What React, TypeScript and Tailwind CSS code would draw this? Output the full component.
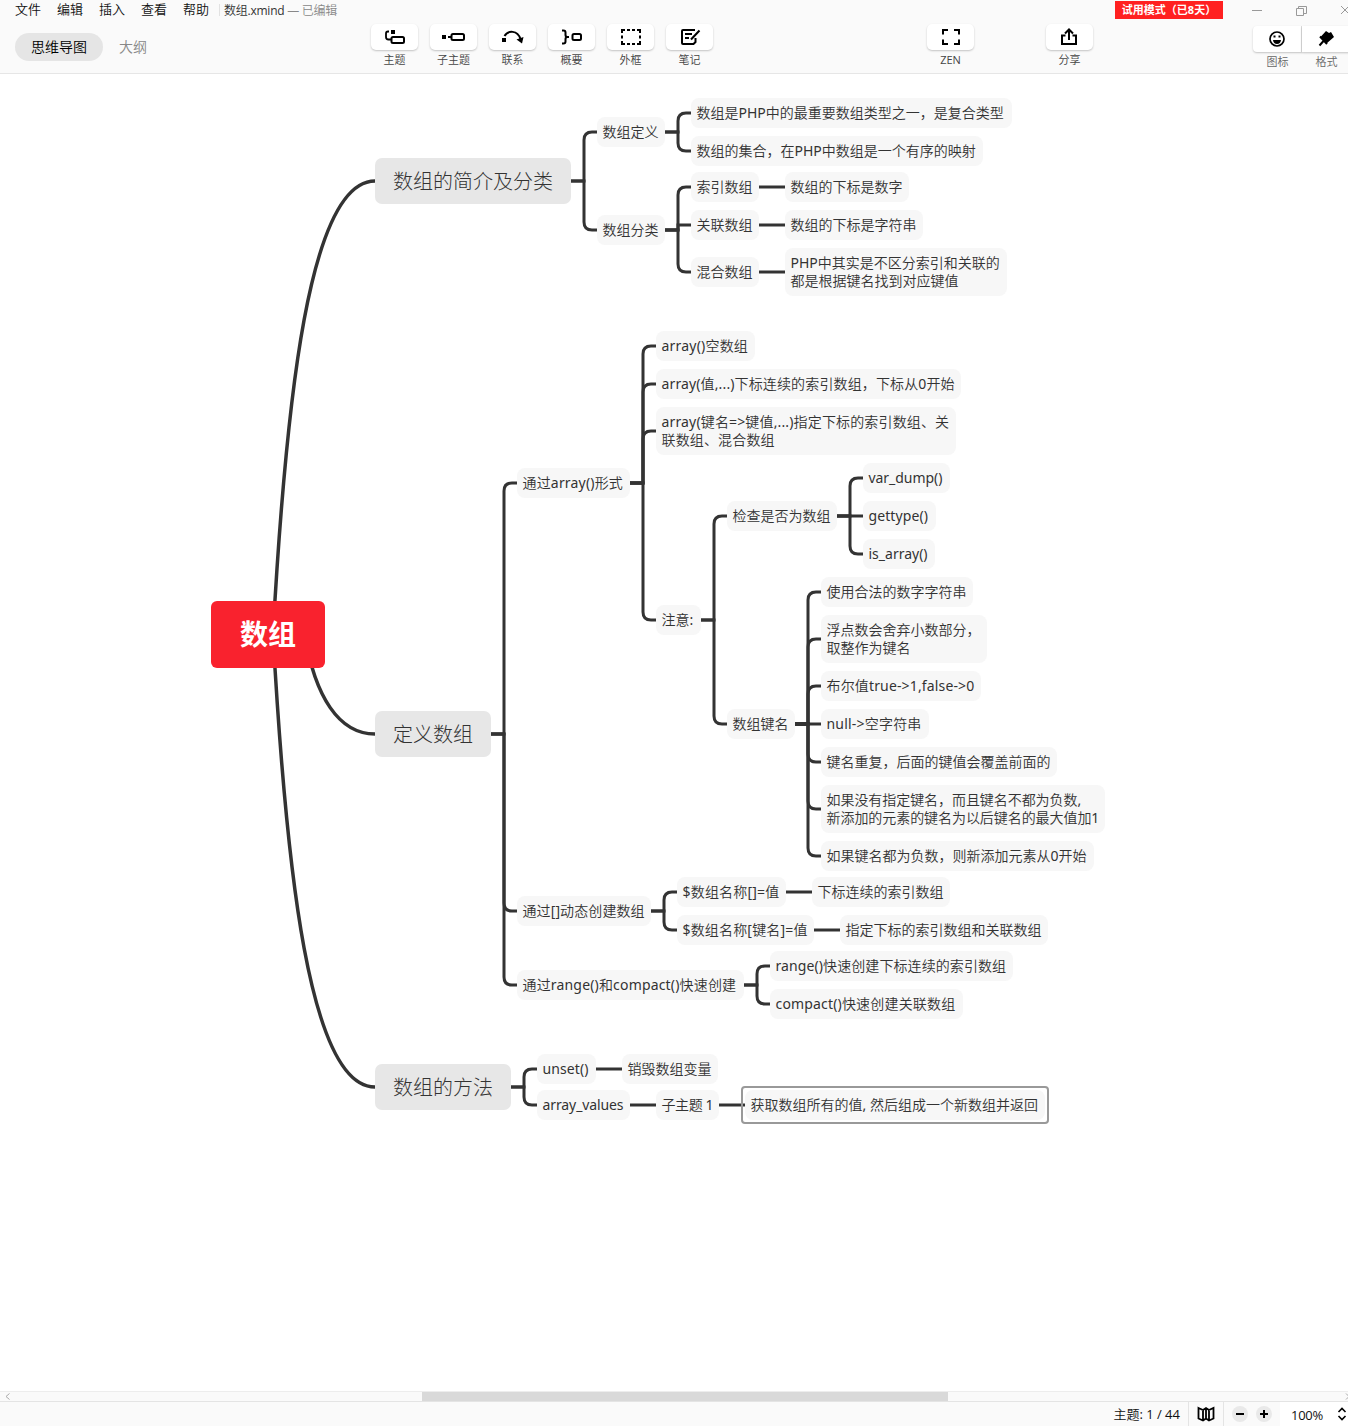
import type { ReactNode } from "react";

type Topic = {
  id: string;
  parent?: string;
  text: string;
  x: number;
  y: number;
  w: number;
  h?: number;
  tracking?: number;
};

// x is the left edge, y the vertical centre
const mainTopics: Topic[] = [
  { id: "intro", text: "数组的简介及分类", x: 375, y: 181, w: 196 },
  { id: "define", text: "定义数组", x: 375, y: 734, w: 116 },
  { id: "methods", text: "数组的方法", x: 375, y: 1087, w: 136 },
];

const subTopics: Topic[] = [
  { id: "i1", parent: "intro", text: "数组定义", x: 597, y: 132, w: 68 },
  { id: "i2", parent: "intro", text: "数组分类", x: 597, y: 230, w: 68 },
  { id: "i11", parent: "i1", text: "数组是PHP中的最重要数组类型之一，是复合类型", x: 691, y: 113, w: 321 },
  { id: "i12", parent: "i1", text: "数组的集合，在PHP中数组是一个有序的映射", x: 691, y: 151, w: 292 },
  { id: "i21", parent: "i2", text: "索引数组", x: 691, y: 187, w: 68 },
  { id: "i22", parent: "i2", text: "关联数组", x: 691, y: 225, w: 68 },
  { id: "i23", parent: "i2", text: "混合数组", x: 691, y: 272, w: 68 },
  { id: "i211", parent: "i21", text: "数组的下标是数字", x: 785, y: 187, w: 124 },
  { id: "i221", parent: "i22", text: "数组的下标是字符串", x: 785, y: 225, w: 138 },
  { id: "i231", parent: "i23", text: "PHP中其实是不区分索引和关联的\n都是根据键名找到对应键值", x: 785, y: 272, w: 222, h: 48 },

  { id: "d1", parent: "define", text: "通过array()形式", x: 517, y: 483, w: 113, tracking: 0.18 },
  { id: "d2", parent: "define", text: "通过[]动态创建数组", x: 517, y: 911, w: 134, tracking: 0.1 },
  { id: "d3", parent: "define", text: "通过range()和compact()快速创建", x: 517, y: 985, w: 227, tracking: 0.17 },
  { id: "d11", parent: "d1", text: "array()空数组", x: 656, y: 346, w: 99, tracking: 0.2 },
  { id: "d12", parent: "d1", text: "array(值,...)下标连续的索引数组，下标从0开始", x: 656, y: 384, w: 305, tracking: 0.13 },
  { id: "d13", parent: "d1", text: "array(键名=>键值,...)指定下标的索引数组、关\n联数组、混合数组", x: 656, y: 431, w: 300, h: 48, tracking: 0.15 },
  { id: "d14", parent: "d1", text: "注意:", x: 656, y: 620, w: 45 },
  { id: "d141", parent: "d14", text: "检查是否为数组", x: 727, y: 516, w: 110 },
  { id: "d142", parent: "d14", text: "数组键名", x: 727, y: 724, w: 68 },
  { id: "c1", parent: "d141", text: "var_dump()", x: 863, y: 478, w: 87, tracking: -0.05 },
  { id: "c2", parent: "d141", text: "gettype()", x: 863, y: 516, w: 73, tracking: 0.1 },
  { id: "c3", parent: "d141", text: "is_array()", x: 863, y: 554, w: 72 },
  { id: "k1", parent: "d142", text: "使用合法的数字字符串", x: 821, y: 592, w: 152 },
  { id: "k2", parent: "d142", text: "浮点数会舍弃小数部分，\n取整作为键名", x: 821, y: 639, w: 166, h: 48 },
  { id: "k3", parent: "d142", text: "布尔值true->1,false->0", x: 821, y: 686, w: 160, tracking: 0.15 },
  { id: "k4", parent: "d142", text: "null->空字符串", x: 821, y: 724, w: 108, tracking: 0.2 },
  { id: "k5", parent: "d142", text: "键名重复，后面的键值会覆盖前面的", x: 821, y: 762, w: 236 },
  { id: "k6", parent: "d142", text: "如果没有指定键名，而且键名不都为负数,\n新添加的元素的键名为以后键名的最大值加1", x: 821, y: 809, w: 284, h: 48, tracking: -0.06 },
  { id: "k7", parent: "d142", text: "如果键名都为负数，则新添加元素从0开始", x: 821, y: 856, w: 273 },
  { id: "d21", parent: "d2", text: "$数组名称[]=值", x: 677, y: 892, w: 109, tracking: 0.2 },
  { id: "d22", parent: "d2", text: "$数组名称[键名]=值", x: 677, y: 930, w: 137, tracking: 0.17 },
  { id: "d211", parent: "d21", text: "下标连续的索引数组", x: 812, y: 892, w: 138 },
  { id: "d221", parent: "d22", text: "指定下标的索引数组和关联数组", x: 840, y: 930, w: 208 },
  { id: "d31", parent: "d3", text: "range()快速创建下标连续的索引数组", x: 770, y: 966, w: 243, tracking: 0.09 },
  { id: "d32", parent: "d3", text: "compact()快速创建关联数组", x: 770, y: 1004, w: 193, tracking: 0.17 },

  { id: "m1", parent: "methods", text: "unset()", x: 537, y: 1069, w: 59, tracking: 0.1 },
  { id: "m2", parent: "methods", text: "array_values", x: 537, y: 1105, w: 93, tracking: -0.1 },
  { id: "m11", parent: "m1", text: "销毁数组变量", x: 622, y: 1069, w: 96 },
  { id: "m21", parent: "m2", text: "子主题 1", x: 656, y: 1105, w: 63, tracking: -0.4 },
  { id: "m211", parent: "m21", text: "获取数组所有的值, 然后组成一个新数组并返回", x: 745, y: 1105, w: 300 },
];

const byId = new Map([...mainTopics, ...subTopics].map((t) => [t.id, t]));

function elbow(child: Topic) {
  const parent = byId.get(child.parent!)!;
  const startX = parent.x + parent.w;
  const dy = child.y - parent.y;
  if (dy === 0) return `M${startX} ${parent.y}H${child.x}`;
  const trunk = startX + 13;
  // too close to the trunk for a rounded corner
  if (Math.abs(dy) < 8) return `M${startX} ${parent.y}H${trunk}V${child.y}H${child.x}`;
  const r = 8;
  const dir = Math.sign(dy);
  return `M${startX} ${parent.y}H${trunk}V${child.y - dir * r}Q${trunk} ${child.y} ${trunk + r} ${child.y}H${child.x}`;
}

function Links() {
  return (
    <svg className="absolute left-0 top-0" width="1348" height="1317" viewBox="0 74 1348 1317" fill="none" stroke="#333">
      <g strokeWidth="3.5">
        <path d="M273 634C286 400 309 181 375 181" />
        <path d="M304.500 634C315 697 339 734 375 734" />
        <path d="M273 634C286 868 309 1087 375 1087" />
      </g>
      <g strokeWidth="3">
        {subTopics.map((t) => (
          <path key={t.id} d={elbow(t)} />
        ))}
      </g>
    </svg>
  );
}

function MindMap() {
  return (
    <main className="relative h-[1317px] overflow-hidden bg-white font-['Noto_Sans','Noto_Sans_CJK_SC_DemiLight','Noto_Sans_CJK_SC_Light','Noto_Sans_CJK_SC',sans-serif] text-[#333]">
      <Links />
      <div className="absolute left-[211px] top-[527px] flex h-[67px] w-[114px] items-center justify-center rounded-[6px] bg-[#f9222e] pb-1 font-['Noto_Sans_CJK_SC',sans-serif] text-[28px] font-bold text-white">
        数组
      </div>
      {mainTopics.map((t) => (
        <div
          key={t.id}
          className="absolute flex h-[46px] items-center justify-center whitespace-nowrap rounded-[7px] bg-[#e7e7e7] pt-0.5 font-['Noto_Sans','Noto_Sans_CJK_SC',sans-serif] text-xl font-light"
          style={{ left: t.x, top: t.y - 23 - 74, width: t.w }}
        >
          {t.text}
        </div>
      ))}
      {subTopics.map((t) => (
        <div
          key={t.id}
          className="absolute flex items-center whitespace-pre rounded-[8px] bg-[#f7f7f7] pl-[5.5px] text-sm leading-[18px]"
          style={{ left: t.x, top: t.y - (t.h ?? 30) / 2 - 74, width: t.w, height: t.h ?? 30, letterSpacing: t.tracking }}
        >
          {t.text}
        </div>
      ))}
      {/* selection frame */}
      <div className="absolute left-[741px] top-[1012px] h-[38px] w-[308px] rounded-[4px] border-2 border-[#999]" />
    </main>
  );
}

function Icon({ children }: { children: ReactNode }) {
  return (
    <svg width="47" height="26" viewBox="0 0 47 26" fill="none" stroke="#000" strokeWidth="2">
      {children}
    </svg>
  );
}

const tools = [
  {
    label: "主题",
    icon: (
      <>
        <path d="M18 7.5h-1q-2 0-2 2V13q0 2.5 2.500 2.500H20" strokeWidth="1.8" />
        <path d="M20 6h4v4h-4z" fill="#000" stroke="none" />
        <rect x="20.500" y="13" width="12.500" height="6" rx="1.500" />
      </>
    ),
  },
  {
    label: "子主题",
    icon: (
      <>
        <path d="M12 11h4v4h-4z" fill="#000" stroke="none" />
        <path d="M18 13h3" />
        <rect x="21.500" y="10" width="12.500" height="6" rx="1.500" />
      </>
    ),
  },
  {
    label: "联系",
    icon: (
      <>
        <path d="M13 14h4v4h-4z" fill="#000" stroke="none" />
        <path d="M15.500 12C19 6 28.500 6 31.500 15" />
        <path d="M27.500 15.500 34.500 13 33 19.500z" fill="#000" stroke="none" />
      </>
    ),
  },
  {
    label: "概要",
    icon: (
      <>
        <path d="M14 6.500h1.500q2 0 2 2V11q0 2 2 2H21M14 19.500h1.500q2 0 2-2V15q0-2 2-2" />
        <rect x="24.500" y="10" width="8.500" height="6" rx="1.500" />
      </>
    ),
  },
  {
    label: "外框",
    icon: (
      <path d="M15 9V6h3M20 6h3M25 6h3M30 6h3v3M33 11.500v3M33 17v3h-3M28 20h-3M23 20h-3M18 20h-3v-3M15 14.500v-3" />
    ),
  },
  {
    label: "笔记",
    icon: (
      <>
        <path d="M29 6H17q-1 0-1 1v12q0 1 1 1h10.500l2-2v-4" />
        <path d="M19 10h7M19 14h4M33.500 6.500 25 15.500" />
      </>
    ),
  },
];

function ToolButton({ label, children }: { label: string; children: ReactNode }) {
  return (
    <div className="flex w-[47px] flex-col items-center">
      <button className="h-[26px] w-[47px] rounded-[5px] bg-white shadow-[0_1px_2px_rgba(0,0,0,0.22)]">
        <Icon>{children}</Icon>
      </button>
      <span className="mt-0.5 whitespace-nowrap text-[11px] leading-4 text-[#444]">{label}</span>
    </div>
  );
}

function Header() {
  return (
    <header className="h-[74px] overflow-hidden border-b border-[#e6e6e6] bg-[#fafafa]">
      <div className="flex h-5 items-center pl-[15px] text-[13px] text-[#111]">
        <nav className="flex gap-4">
          {["文件", "编辑", "插入", "查看", "帮助"].map((m) => (
            <span key={m}>{m}</span>
          ))}
        </nav>
        <span className="ml-2.5 h-3 w-px bg-[#e2e2e2]" />
        <span className="ml-1 whitespace-nowrap pt-px text-xs tracking-[-0.250px] text-[#333]">
          数组.xmind <span className="text-[#888]">— 已编辑</span>
        </span>
        <span className="ml-auto mr-[29px] flex h-[18px] w-[108px] items-center justify-center whitespace-nowrap bg-[#ff2020] font-['Open_Sans','Noto_Sans_CJK_SC',sans-serif] text-[11px] font-bold text-white">
          试用模式（已8天）
        </span>
        <svg className="shrink-0" width="96" height="20" fill="none" stroke="#999">
          <path d="M0 10.500h10M44.500 8.500h7v7h-7zM46.500 8.500v-2h8v7h-3M89 6l8 8M97 6l-8 8" />
        </svg>
      </div>

      <div className="flex pt-1">
        <div className="mt-[9px] flex h-7 w-[356px] shrink-0 items-center pl-[15px] text-sm">
          <span className="flex h-7 w-[88px] items-center justify-center rounded-full bg-[#e5e5e5] text-black">思维导图</span>
          <span className="ml-4 text-[#888]">大纲</span>
        </div>
        <div className="ml-[15px] flex shrink-0 gap-3">
          {tools.map((t) => (
            <ToolButton key={t.label} label={t.label}>
              {t.icon}
            </ToolButton>
          ))}
        </div>
        <div className="ml-[214px] flex shrink-0 gap-[72px]">
          <ToolButton label="ZEN">
            <path d="M16 10.500V6h5M27 6h5v4.500M32 15.500V20h-5M21 20h-5v-4.500" />
          </ToolButton>
          <ToolButton label="分享">
            <path d="M19.500 11.500H16V20h14v-8.500h-3.500M23 16V6M19 9.500 23 5.500l4 4" />
          </ToolButton>
        </div>
        <div className="ml-[160px] mt-0.5 flex w-[98px] shrink-0">
          <div className="flex w-[49px] flex-col items-center">
            <div className="h-[26px] w-full rounded-l-[4px] border-r border-[#ddd] bg-white shadow-[0_1px_2px_rgba(0,0,0,0.22)]">
              <Icon>
                <circle cx="24" cy="13" r="7" strokeWidth="1.700" />
                <path d="M20 14h8q-.5 4-4 4t-4-4z" fill="#000" stroke="none" />
                <path d="M20.500 10.500h2M25.500 10.500h2" />
              </Icon>
            </div>
            <span className="mt-0.5 text-[11px] leading-4 text-[#666]">图标</span>
          </div>
          <div className="flex w-[49px] flex-col items-center">
            <div className="h-[26px] w-full bg-white shadow-[0_1px_2px_rgba(0,0,0,0.22)]">
              <Icon>
                <path d="M24 5l3 2 2-1 3 5-7.500 6.500-6-6.500z" fill="#000" stroke="none" />
                <path d="M18 10.500l7 7.500M21.500 15 17.500 19.500" />
              </Icon>
            </div>
            <span className="mt-0.5 text-[11px] leading-4 text-[#666]">格式</span>
          </div>
        </div>
      </div>
    </header>
  );
}

function Footer() {
  return (
    <footer className="bg-[#fafafa]">
      <div className="flex h-2.5 items-center justify-between border-t border-[#ededed]">
        <svg width="422" height="9" fill="none" stroke="#aaa">
          <path d="M9.500 1.500 6 4.500l3.500 3" />
        </svg>
        <div className="h-full w-[526px] bg-[#d9d9d9]" />
        <svg width="400" height="9" fill="none" stroke="#aaa">
          <path d="M398 1.500l3 3-3 3" />
        </svg>
      </div>
      <div className="flex h-[25px] items-center justify-end border-t border-[#e4e4e4] text-[13px] text-[#111]">
        <span className="mr-2 whitespace-nowrap pt-px">主题: 1 / 44</span>
        <div className="flex h-full w-9 items-center justify-center border-x border-[#e4e4e4]">
          <svg width="18" height="16" fill="none" stroke="#000" strokeWidth="1.800">
            <path d="M1.500 2 6 4l3-2 3 2 4.500-2v10.500L12 14.500l-3-2-3 2-4.500-2zM6 4v10M9 2v10M12 4v10" />
          </svg>
        </div>
        <div className="flex w-14 justify-center gap-2">
          {["M4 8h8", "M4 8h8M8 4v8"].map((d) => (
            <svg key={d} width="16" height="16" stroke="#000" strokeWidth="2">
              <circle cx="8" cy="8" r="8" fill="#e9e9e9" stroke="none" />
              <path d={d} />
            </svg>
          ))}
        </div>
        <div className="flex h-full w-[68px] items-center bg-white pl-[11px]">
          <span className="w-[46px] pt-[3px] tracking-[-0.300px]">100%</span>
          <svg className="shrink-0" width="10" height="14" fill="none" stroke="#000" strokeWidth="1.600">
            <path d="M1.500 5 5 1.500 8.500 5M1.500 9 5 12.500 8.500 9" />
          </svg>
        </div>
      </div>
    </footer>
  );
}

export default function App() {
  return (
    <div className="h-[1426px] w-[1348px] overflow-hidden bg-white font-['Open_Sans','Noto_Sans_CJK_SC_DemiLight','Noto_Sans_CJK_SC_Light','Noto_Sans_CJK_SC',sans-serif]">
      <Header />
      <MindMap />
      <Footer />
    </div>
  );
}
